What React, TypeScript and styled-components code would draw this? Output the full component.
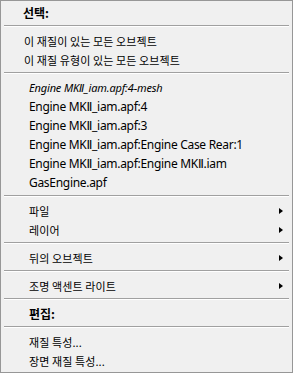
import React from 'react';
import styled, { createGlobalStyle } from 'styled-components';

const GlobalStyle = createGlobalStyle`
    html, body {
        margin: 0;
        padding: 0;
        background: #ffffff;
    }
`;

type Entry =
    | { kind: 'header', label: string, indent: number }
    | { kind: 'item', label: string, indent: number, italic?: boolean, latin?: boolean, submenu?: boolean }
    | { kind: 'sep' };

const entries: Entry[] = [
    { kind: 'header', label: '선택:', indent: 22 },
    { kind: 'sep' },
    { kind: 'item', label: '이 재질이 있는 모든 오브젝트', indent: 23 },
    { kind: 'item', label: '이 재질 유형이 있는 모든 오브젝트', indent: 23 },
    { kind: 'sep' },
    { kind: 'item', label: 'Engine MKⅡ_iam.apf:4-mesh', indent: 28, italic: true, latin: true },
    { kind: 'item', label: 'Engine MKⅡ_iam.apf:4', indent: 28, latin: true },
    { kind: 'item', label: 'Engine MKⅡ_iam.apf:3', indent: 28, latin: true },
    { kind: 'item', label: 'Engine MKⅡ_iam.apf:Engine Case Rear:1', indent: 28, latin: true },
    { kind: 'item', label: 'Engine MKⅡ_iam.apf:Engine MKⅡ.iam', indent: 28, latin: true },
    { kind: 'item', label: 'GasEngine.apf', indent: 28, latin: true },
    { kind: 'sep' },
    { kind: 'item', label: '파일', indent: 28, submenu: true },
    { kind: 'item', label: '레이어', indent: 28, submenu: true },
    { kind: 'sep' },
    { kind: 'item', label: '뒤의 오브젝트', indent: 28, submenu: true },
    { kind: 'sep' },
    { kind: 'item', label: '조명 액센트 라이트', indent: 28, submenu: true },
    { kind: 'sep' },
    { kind: 'header', label: '편집:', indent: 28 },
    { kind: 'sep' },
    { kind: 'item', label: '재질 특성...', indent: 28 },
    { kind: 'item', label: '장면 재질 특성...', indent: 28 },
];

const Menu = styled.div`
    box-sizing: border-box;
    width: 293px;
    height: 373px;
    padding-top: 2px;
    background: #f0f0f0;
    border: 1px solid #979797;
    display: flex;
    flex-direction: column;
    font-family: "Noto Sans CJK KR", "Noto Sans", sans-serif;
    color: #000;
    overflow: hidden;
`;

const Row = styled.div<{ $indent: number }>`
    height: 19px;
    display: flex;
    align-items: center;
    padding-left: ${p => p.$indent}px;
    padding-right: 9px;
    font-size: 11px;
    white-space: nowrap;
`;

const Header = styled(Row)`
    font-weight: bold;
    font-size: 12px;
`;

const Label = styled.span<{ $latin?: boolean, $italic?: boolean }>`
    flex: 1;
    font-family: ${p => p.$latin ? '"Noto Sans", "DejaVu Sans", "Noto Sans CJK KR", sans-serif' : 'inherit'};
    font-size: ${p => p.$latin ? (p.$italic ? '11px' : '12px') : '11px'};
    font-style: ${p => p.$italic ? 'italic' : 'normal'};
    letter-spacing: ${p => p.$latin ? (p.$italic ? '-0.15px' : '-0.3px') : '0.1px'};
`;

const Arrow = styled.span`
    width: 0;
    height: 0;
    border-top: 3.5px solid transparent;
    border-bottom: 3.5px solid transparent;
    border-left: 4px solid #000;
`;

const Separator = styled.div`
    height: 9px;
    padding: 3px 3px 0;
    box-sizing: border-box;

    &::after {
        content: '';
        display: block;
        border-top: 1px solid #a0a0a0;
        border-bottom: 1px solid #ffffff;
    }
`;

export default function App() {
    return <>
        <GlobalStyle />
        <Menu>
            {entries.map((e, i) => {
                if (e.kind === 'sep') return <Separator key={i} />;
                if (e.kind === 'header') return <Header key={i} $indent={e.indent}>{e.label}</Header>;
                return <Row key={i} $indent={e.indent}>
                    <Label $latin={e.latin} $italic={e.italic}>{e.label}</Label>
                    {e.submenu && <Arrow />}
                </Row>;
            })}
        </Menu>
    </>;
}
